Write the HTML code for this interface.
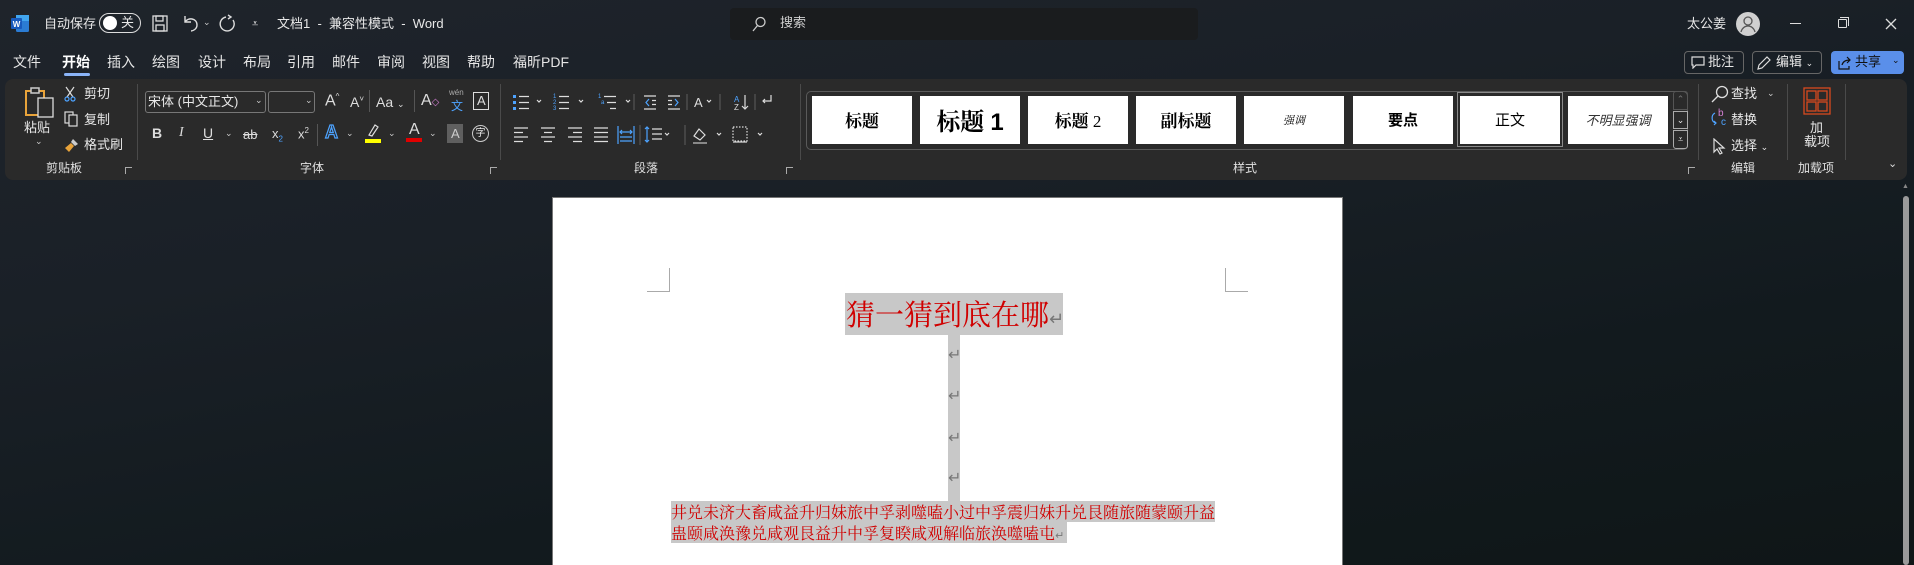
<!DOCTYPE html>
<html><head><meta charset="utf-8">
<style>
*{margin:0;padding:0;box-sizing:border-box}
body{width:1914px;height:565px;overflow:hidden;position:relative;font-family:"Liberation Sans","Noto Sans CJK SC",sans-serif;color:#e8e8e8;font-size:13px;
background:linear-gradient(170deg,#1f242b 0%,#1a2027 35%,#121a1e 70%,#0f1617 100%)}
.a{position:absolute;white-space:nowrap}
.t{font-size:13px;line-height:16px}
.tab{position:absolute;top:53px;font-size:14px;line-height:18px;color:#e6e6e6}
.ribbon{position:absolute;left:5px;top:79px;width:1902px;height:101px;background:#2a2a2a;border-radius:8px}
.sep{position:absolute;top:84px;width:1px;height:76px;background:#4a4a4a}
.lbl{position:absolute;top:160px;font-size:12px;line-height:16px;color:#e0e0e0}
.sty{position:absolute;top:96px;height:48px;width:100px;background:#fff;color:#000;text-align:center;line-height:48px;font-family:"Noto Serif CJK SC",serif}
.chev{position:absolute;font-size:9px;color:#ccc}
.gl{position:absolute;font-family:"Liberation Sans",sans-serif;color:#ddd}
.doc{font-family:"Noto Serif CJK SC","Noto Sans CJK SC",serif;color:#d00000}
.hl{background:#c8c8c8}
.ret{color:#777;font-family:"DejaVu Sans",sans-serif}
</style></head><body>

<!-- title bar -->
<svg class="a" style="left:11px;top:15px" width="18" height="17" viewBox="0 0 18 17"><rect x="5" y="0" width="13" height="17" rx="1.5" fill="#2b7cd3"/><rect x="5" y="0" width="13" height="6" fill="#41a5ee"/><rect x="0" y="3" width="11" height="11" rx="1" fill="#185abd"/><text x="5.5" y="12" font-size="8" fill="#fff" text-anchor="middle" font-family="Liberation Sans" font-weight="bold">W</text></svg>
<div class="a t" style="left:44px;top:16px">自动保存</div>
<div class="a" style="left:99px;top:13px;width:42px;height:20px;border:1.5px solid #ddd;border-radius:10px"></div>
<div class="a" style="left:103px;top:16px;width:14px;height:14px;border-radius:7px;background:#fff"></div>
<div class="a t" style="left:121px;top:15px">关</div>
<svg class="a" style="left:152px;top:15px" width="16" height="17" viewBox="0 0 16 17" fill="none" stroke="#ddd" stroke-width="1.3"><rect x="1" y="1" width="14" height="15"/><rect x="4" y="1" width="7" height="5"/><rect x="4" y="10" width="8" height="6"/></svg>
<svg class="a" style="left:182px;top:13px" width="18" height="20" viewBox="0 0 18 20" fill="none" stroke="#ddd" stroke-width="1.4"><path d="M3 3v6h6"/><path d="M3 9c3-5 12-4 12 3 0 4-4 6-6 6"/></svg>
<div class="chev" style="left:203px;top:17px">⌄</div>
<svg class="a" style="left:219px;top:13px" width="18" height="20" viewBox="0 0 18 20" fill="none" stroke="#ddd" stroke-width="1.4"><path d="M9 2l3 2-3 2"/><path d="M7 4a7 7 0 1 0 7 3"/></svg>
<div class="a t" style="left:252px;top:16px;font-size:11px">⩡</div>
<div class="a t" style="left:277px;top:16px">文档1&nbsp; - &nbsp;兼容性模式&nbsp; - &nbsp;Word</div>
<div class="a" style="left:730px;top:8px;width:468px;height:32px;background:#1a1c1e;border-radius:4px"></div>
<svg class="a" style="left:752px;top:16px" width="14" height="16" viewBox="0 0 14 16" fill="none" stroke="#ccc" stroke-width="1.3"><circle cx="8.5" cy="6" r="4.5"/><path d="M5.5 9.5L1 15"/></svg>
<div class="a t" style="left:780px;top:15px;color:#cfcfcf">搜索</div>
<div class="a t" style="left:1687px;top:16px">太公姜</div>
<div class="a" style="left:1736px;top:12px;width:24px;height:24px;border-radius:12px;background:#d0d0d0"></div>
<svg class="a" style="left:1736px;top:12px" width="24" height="24" viewBox="0 0 24 24" fill="none" stroke="#555" stroke-width="1.3"><circle cx="12" cy="9" r="4"/><path d="M5 20c1-4 4-6 7-6s6 2 7 6"/></svg>
<div class="a" style="left:1790px;top:23px;width:11px;height:1px;background:#ddd"></div>
<div class="a" style="left:1838px;top:19px;width:9px;height:9px;border:1.2px solid #ddd;border-radius:1px"></div>
<div class="a" style="left:1840px;top:17px;width:9px;height:9px;border-top:1.2px solid #ddd;border-right:1.2px solid #ddd"></div>
<svg class="a" style="left:1885px;top:18px" width="12" height="12" viewBox="0 0 12 12" stroke="#ddd" stroke-width="1.3"><path d="M1 1l10 10M11 1L1 11"/></svg>

<!-- tabs -->
<div class="tab" style="left:13px">文件</div>
<div class="tab" style="left:62px;font-weight:bold;color:#fff">开始</div>
<div class="a" style="left:64px;top:73px;width:26px;height:3px;background:#8ab4f8;border-radius:2px"></div>
<div class="tab" style="left:107px">插入</div>
<div class="tab" style="left:152px">绘图</div>
<div class="tab" style="left:198px">设计</div>
<div class="tab" style="left:243px">布局</div>
<div class="tab" style="left:287px">引用</div>
<div class="tab" style="left:332px">邮件</div>
<div class="tab" style="left:377px">审阅</div>
<div class="tab" style="left:422px">视图</div>
<div class="tab" style="left:467px">帮助</div>
<div class="tab" style="left:513px">福昕PDF</div>

<div class="a" style="left:1684px;top:51px;width:60px;height:23px;border:1px solid #666;border-radius:4px"></div>
<svg class="a" style="left:1691px;top:56px" width="14" height="13" viewBox="0 0 14 13" fill="none" stroke="#ddd" stroke-width="1.2"><path d="M1 1h12v8H5l-3 3V9H1z"/></svg>
<div class="a t" style="left:1708px;top:54px">批注</div>
<div class="a" style="left:1752px;top:51px;width:70px;height:23px;border:1px solid #666;border-radius:4px"></div>
<svg class="a" style="left:1756px;top:55px" width="16" height="16" viewBox="0 0 16 16" fill="none" stroke="#ddd" stroke-width="1.2"><path d="M2 14l1-4 8-8 3 3-8 8z"/></svg>
<div class="a t" style="left:1776px;top:54px">编辑 <span style="font-size:9px">⌄</span></div>
<div class="a" style="left:1831px;top:51px;width:73px;height:23px;background:#5a8fea;border-radius:4px"></div>
<svg class="a" style="left:1837px;top:55px" width="15" height="15" viewBox="0 0 15 15" fill="none" stroke="#111" stroke-width="1.2"><path d="M2 6v8h10v-3"/><path d="M5 10c1-4 4-5 8-5M10 2l3 3-3 3"/></svg>
<div class="a t" style="left:1855px;top:54px;color:#111">共享</div>
<div class="a" style="left:1892px;top:55px;font-size:9px;color:#111">⌄</div>

<!-- ribbon -->
<div class="ribbon"></div>
<!-- clipboard -->
<svg class="a" style="left:24px;top:86px" width="32" height="32" viewBox="0 0 32 32" fill="none"><rect x="2" y="5" width="18" height="24" stroke="#e8a33a" stroke-width="2"/><rect x="7" y="2" width="8" height="5" stroke="#ccc" stroke-width="1.5" fill="#2a2a2a"/><rect x="14" y="12" width="15" height="19" stroke="#ddd" stroke-width="1.3" fill="#2a2a2a"/></svg>
<div class="a t" style="left:24px;top:120px">粘贴</div>
<div class="chev" style="left:35px;top:136px">⌄</div>
<svg class="a" style="left:64px;top:86px" width="12" height="16" viewBox="0 0 12 16" fill="none" stroke="#ddd" stroke-width="1.2"><path d="M2 1l7 10M10 1L3 11"/><circle cx="3" cy="13" r="2" stroke="#4da3ff"/><circle cx="9" cy="13" r="2" stroke="#4da3ff"/></svg>
<div class="a t" style="left:84px;top:86px">剪切</div>
<svg class="a" style="left:64px;top:111px" width="14" height="16" viewBox="0 0 14 16" fill="none" stroke="#ddd" stroke-width="1.2"><rect x="1" y="1" width="8" height="11"/><rect x="5" y="4" width="8" height="11" fill="#2a2a2a"/></svg>
<div class="a t" style="left:84px;top:112px">复制</div>
<svg class="a" style="left:64px;top:137px" width="16" height="16" viewBox="0 0 16 16"><path d="M9 2l5 5-3 2-4-4z" fill="#ccc"/><path d="M7 6l3 3-5 6-4-4z" fill="#e8a33a"/></svg>
<div class="a t" style="left:84px;top:137px">格式刷</div>
<div class="lbl" style="left:46px">剪贴板</div>
<div class="a" style="left:125px;top:167px;width:7px;height:7px;border:1px solid #aaa;border-width:1px 0 0 1px"></div>
<div class="sep" style="left:137px"></div>

<!-- font -->
<div class="a" style="left:145px;top:91px;width:121px;height:22px;border:1px solid #777;border-radius:3px"></div>
<div class="a t" style="left:148px;top:94px">宋体 (中文正文)</div>
<div class="chev" style="left:255px;top:95px">⌄</div>
<div class="a" style="left:268px;top:91px;width:47px;height:22px;border:1px solid #777;border-radius:3px"></div>
<div class="chev" style="left:305px;top:95px">⌄</div>
<div class="gl" style="left:325px;top:92px;font-size:16px">A<sup style="font-size:8px">^</sup></div>
<div class="gl" style="left:350px;top:94px;font-size:14px">A<sup style="font-size:8px">˅</sup></div>
<div class="a" style="left:369px;top:90px;width:1px;height:22px;background:#555"></div>
<div class="gl" style="left:376px;top:94px;font-size:14px">Aa <span style="font-size:9px">⌄</span></div>
<div class="a" style="left:414px;top:90px;width:1px;height:22px;background:#555"></div>
<div class="gl" style="left:421px;top:92px;font-size:16px">A<span style="color:#d47fd4;font-size:10px">◇</span></div>
<div class="a" style="left:449px;top:88px;font-size:8px;color:#aaa">wén</div>
<div class="a" style="left:451px;top:97px;font-size:12px;color:#4da3ff">文</div>
<div class="a" style="left:473px;top:92px;width:16px;height:18px;border:1px solid #ddd"></div>
<div class="gl" style="left:477px;top:93px;font-size:13px">A</div>
<div class="gl" style="left:152px;top:125px;font-size:14px;font-weight:bold">B</div>
<div class="gl" style="left:179px;top:125px;font-size:14px;font-style:italic;font-family:'Liberation Serif',serif">I</div>
<div class="gl" style="left:203px;top:125px;font-size:14px;text-decoration:underline">U</div>
<div class="chev" style="left:225px;top:128px">⌄</div>
<div class="gl" style="left:243px;top:127px;font-size:13px;text-decoration:line-through">ab</div>
<div class="gl" style="left:272px;top:126px;font-size:13px">x<sub style="font-size:8px;color:#4da3ff">2</sub></div>
<div class="gl" style="left:298px;top:126px;font-size:13px">x<sup style="font-size:8px">2</sup></div>
<div class="a" style="left:317px;top:124px;width:1px;height:22px;background:#555"></div>
<div class="gl" style="left:325px;top:122px;font-size:18px;font-weight:bold;color:#2a2a2a;-webkit-text-stroke:1.2px #4da3ff">A</div>
<div class="chev" style="left:346px;top:128px">⌄</div>
<svg class="a" style="left:365px;top:122px" width="16" height="22" viewBox="0 0 16 22"><path d="M4 13l6-10 3 2-6 9z" fill="none" stroke="#ddd" stroke-width="1.2"/><rect x="0" y="17" width="16" height="4" fill="#ffff00"/></svg>
<div class="chev" style="left:388px;top:128px">⌄</div>
<div class="gl" style="left:409px;top:121px;font-size:16px">A</div>
<div class="a" style="left:406px;top:138px;width:16px;height:4px;background:#e00000"></div>
<div class="chev" style="left:429px;top:128px">⌄</div>
<div class="a" style="left:447px;top:124px;width:16px;height:19px;background:#5f5f5f"></div>
<div class="gl" style="left:451px;top:126px;font-size:13px;color:#ccc">A</div>
<div class="a" style="left:472px;top:125px;width:17px;height:17px;border:1px solid #ccc;border-radius:9px;font-size:10px;text-align:center;line-height:15px">字</div>
<div class="lbl" style="left:300px">字体</div>
<div class="a" style="left:490px;top:167px;width:7px;height:7px;border:1px solid #aaa;border-width:1px 0 0 1px"></div>
<div class="sep" style="left:500px"></div>

<!-- paragraph -->
<svg class="a" style="left:512px;top:92px" width="260" height="20" viewBox="0 0 260 20" fill="none" stroke="#ddd" stroke-width="1.2">
<g fill="#4da3ff" stroke="none"><rect x="1" y="3" width="3" height="3"/><rect x="1" y="9" width="3" height="3"/><rect x="1" y="15" width="3" height="3"/></g>
<path d="M7 4.5h10M7 10.5h10M7 16.5h10"/>
<path d="M25 8l2 2 2-2M67 8l2 2 2-2M114 8l2 2 2-2M195 8l2 2 2-2"/>
<g fill="#4da3ff" stroke="none" font-size="6" font-family="Liberation Sans"><text x="41" y="6">1</text><text x="41" y="12">2</text><text x="41" y="18">3</text><text x="86" y="6">1</text><text x="89" y="12">a</text></g>
<path d="M47 4.5h10M47 10.5h10M47 16.5h10M92 4.5h12M95 10.5h9M98 16.5h6"/>
<path d="M122 2v16" stroke="#555"/>
<path d="M132 4h12M140 8.5h4M140 12.5h4M132 17h12"/><path d="M137 7l-3 3.5 3 3.5" stroke="#4da3ff"/>
<path d="M156 4h12M156 8.5h4M156 12.5h4M156 17h12"/><path d="M163 7l3 3.5-3 3.5" stroke="#4da3ff"/>
<path d="M175 2v16" stroke="#555"/>
<text x="182" y="15" font-size="13" fill="#ddd" stroke="none" font-family="Liberation Sans">A</text>
<path d="M208 2v16" stroke="#555"/>
<text x="222" y="10" font-size="8" fill="#4da3ff" stroke="none" font-family="Liberation Sans">A</text><text x="222" y="18" font-size="8" fill="#ddd" stroke="none" font-family="Liberation Sans">Z</text>
<path d="M233 3v14M230 14l3 3 3-3"/>
<path d="M243 2v16" stroke="#555"/>
<path d="M259 3v6h-8M253 7l-2 2 2 2"/>
</svg>
<svg class="a" style="left:512px;top:124px" width="260" height="22" viewBox="0 0 260 22" fill="none" stroke="#ddd" stroke-width="1.2">
<path d="M2 4h14M2 8.5h9M2 13h14M2 17.5h9"/>
<path d="M29 4h14M32 8.5h8M29 13h14M32 17.5h8"/>
<path d="M56 4h14M61 8.5h9M56 13h14M61 17.5h9"/>
<path d="M82 4h14M82 8.5h14M82 13h14M82 17.5h14"/>
<path d="M106 2v18M122 2v18M108 8h12M110 6l-2 2 2 2M118 6l2 2-2 2M108 13h12M108 17h12" stroke="#4da3ff"/>
<path d="M128 1v20" stroke="#555"/>
<path d="M140 5h10M140 10h10M140 15h10"/><path d="M135 3v15M133 5l2-2 2 2M133 16l2 2 2-2" stroke="#4da3ff"/>
<path d="M153 9l2 2 2-2M205 9l2 2 2-2M246 9l2 2 2-2"/>
<path d="M173 1v20" stroke="#555"/>
<path d="M182 12l5-7 6 6-5 5z"/><path d="M181 19h14" stroke="#888" stroke-width="2"/>
<path d="M221 3h14v14h-14z" stroke-dasharray="1.5 1.5"/><path d="M221 18h14"/>
</svg>
<div class="lbl" style="left:634px">段落</div>
<div class="a" style="left:786px;top:167px;width:7px;height:7px;border:1px solid #aaa;border-width:1px 0 0 1px"></div>
<div class="sep" style="left:800px"></div>

<!-- styles -->
<div class="a" style="left:806px;top:91px;width:882px;height:59px;border:1px solid #5a5a5a;border-radius:5px"></div>
<div class="sty" style="left:812px;font-size:17px;font-weight:bold">标题</div>
<div class="sty" style="left:920px;font-size:24px;font-weight:bold">标题 <span style="font-family:'Liberation Sans'">1</span></div>
<div class="sty" style="left:1028px;font-size:17px;font-weight:bold">标题 <span style="font-family:'Liberation Serif';font-weight:normal">2</span></div>
<div class="sty" style="left:1136px;font-size:17px;font-weight:bold">副标题</div>
<div class="sty" style="left:1244px;font-size:11px;font-style:italic">强调</div>
<div class="sty" style="left:1353px;font-size:15px;font-family:'Noto Sans CJK SC',sans-serif;font-weight:bold">要点</div>
<div class="a" style="left:1457px;top:92px;width:106px;height:55px;border:1.5px solid #8a8a8a"></div>
<div class="sty" style="left:1460px;font-size:15px;font-family:'Noto Sans CJK SC',sans-serif">正文</div>
<div class="sty" style="left:1568px;font-size:13px;font-style:italic;color:#333;font-family:'Noto Sans CJK SC',sans-serif">不明显强调</div>
<div class="a" style="left:1673px;top:91px;width:15px;height:19px;border:1px solid #555;border-radius:3px 3px 0 0;font-size:9px;color:#777;text-align:center;line-height:14px">⌃</div>
<div class="a" style="left:1673px;top:111px;width:15px;height:18px;border:1px solid #aaa;font-size:9px;text-align:center;line-height:16px">⌄</div>
<div class="a" style="left:1673px;top:130px;width:15px;height:19px;border:1px solid #aaa;border-radius:0 0 3px 3px;font-size:9px;text-align:center;line-height:17px">⩡</div>
<div class="lbl" style="left:1233px">样式</div>
<div class="a" style="left:1688px;top:167px;width:7px;height:7px;border:1px solid #aaa;border-width:1px 0 0 1px"></div>
<div class="sep" style="left:1698px"></div>

<!-- editing -->
<svg class="a" style="left:1711px;top:85px" width="18" height="18" viewBox="0 0 18 18" fill="none" stroke="#ddd" stroke-width="1.3"><circle cx="11" cy="7" r="5.5"/><path d="M7 11l-6 6"/></svg>
<div class="a t" style="left:1731px;top:86px">查找</div>
<div class="chev" style="left:1767px;top:88px">⌄</div>
<div class="a" style="left:1718px;top:108px;font-size:10px;color:#d47fd4">b</div>
<div class="a" style="left:1721px;top:117px;font-size:10px;color:#4da3ff">c</div>
<svg class="a" style="left:1710px;top:112px" width="10" height="14" viewBox="0 0 10 14" fill="none" stroke="#4da3ff" stroke-width="1.2"><path d="M5 1C1 3 1 10 6 11M4 9l2 2-2 2"/></svg>
<div class="a t" style="left:1731px;top:112px">替换</div>
<svg class="a" style="left:1712px;top:138px" width="14" height="17" viewBox="0 0 14 17" fill="none" stroke="#ddd" stroke-width="1.2"><path d="M2 1v13l3-3 3 5 2-1-3-5h5z"/></svg>
<div class="a t" style="left:1731px;top:138px">选择 <span style="font-size:9px">⌄</span></div>
<div class="lbl" style="left:1731px">编辑</div>
<div class="sep" style="left:1787px"></div>
<svg class="a" style="left:1803px;top:87px" width="28" height="28" viewBox="0 0 28 28" fill="none" stroke="#d8491f" stroke-width="1.3"><rect x="1" y="1" width="26" height="26"/><rect x="4" y="4" width="9" height="9"/><rect x="15" y="4" width="9" height="9"/><rect x="4" y="15" width="9" height="9"/><rect x="15" y="15" width="9" height="9"/></svg>
<div class="a t" style="left:1810px;top:120px">加</div>
<div class="a t" style="left:1804px;top:134px">载项</div>
<div class="lbl" style="left:1798px">加载项</div>
<div class="sep" style="left:1845px"></div>
<div class="a" style="left:1888px;top:157px;font-size:11px;color:#ddd">⌄</div>

<!-- scrollbar -->
<div class="a" style="left:1902px;top:183px;font-size:7px;color:#888">▲</div>
<div class="a" style="left:1903px;top:196px;width:6px;height:369px;background:#9a9a9a;border-radius:3px"></div>

<!-- page -->
<div class="a" style="left:552px;top:197px;width:791px;height:368px;background:#fff;border:1px solid #777;border-bottom:none"></div>
<div class="a" style="left:647px;top:268px;width:23px;height:24px;border-right:1px solid #aaa;border-bottom:1px solid #aaa"></div>
<div class="a" style="left:1225px;top:268px;width:23px;height:24px;border-left:1px solid #aaa;border-bottom:1px solid #aaa"></div>
<div class="a hl" style="left:845px;top:293px;width:218px;height:42px"></div>
<div class="a doc" style="left:846px;top:294px;font-size:29px;line-height:40px">猜一猜到底在哪<span class="ret" style="font-size:18px">↵</span></div>
<div class="a hl" style="left:948px;top:335px;width:12px;height:166px"></div>
<div class="a ret" style="left:948px;top:345px;font-size:16px">↵</div>
<div class="a ret" style="left:948px;top:386px;font-size:16px">↵</div>
<div class="a ret" style="left:948px;top:428px;font-size:16px">↵</div>
<div class="a ret" style="left:948px;top:468px;font-size:16px">↵</div>
<div class="a hl" style="left:671px;top:501px;width:544px;height:21px"></div>
<div class="a hl" style="left:671px;top:522px;width:396px;height:21px"></div>
<div class="a doc" style="left:671px;top:501px;font-size:16px;line-height:21px">井兑未济大畜咸益升归妹旅中孚剥噬嗑小过中孚震归妹升兑艮随旅随蒙颐升益</div>
<div class="a doc" style="left:671px;top:522px;font-size:16px;line-height:21px">蛊颐咸涣豫兑咸观艮益升中孚复睽咸观解临旅涣噬嗑屯<span class="ret" style="font-size:11px">↵</span></div>
</body></html>
